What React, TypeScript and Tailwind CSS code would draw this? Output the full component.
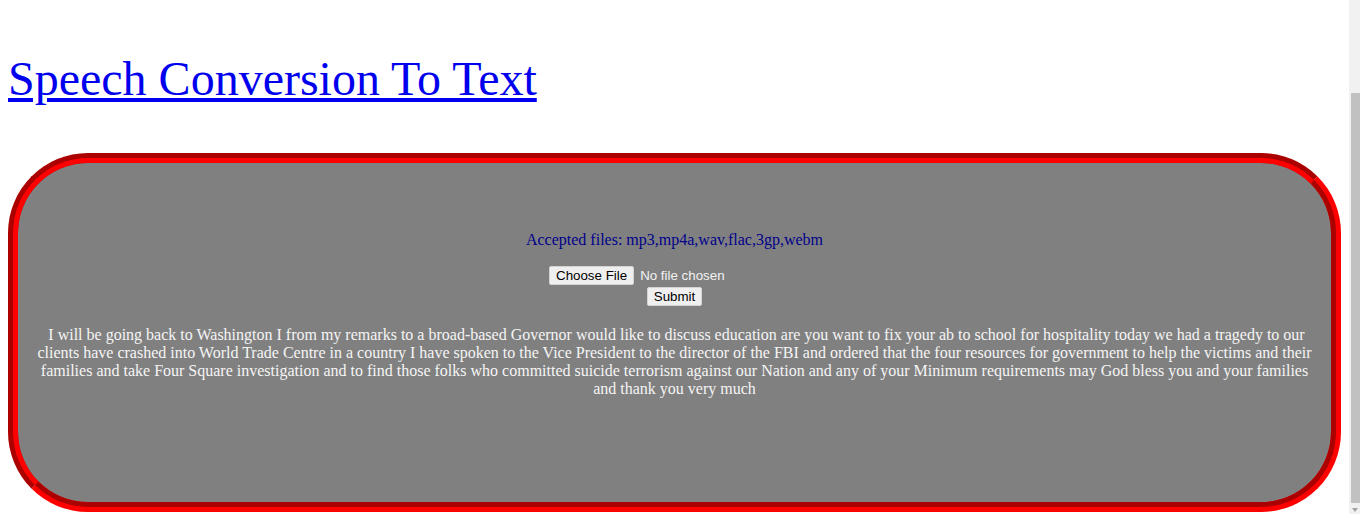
import React from "react";

export default function App() {
  const speech =
    " I will be going back to Washington I from my remarks to a broad-based Governor would like to discuss education are you want to fix your ab to school for hospitality today we had a tragedy to our clients have crashed into World Trade Centre in a country I have spoken to the Vice President to the director of the FBI and ordered that the four resources for government to help the victims and their families and take Four Square investigation and to find those folks who committed suicide terrorism against our Nation and any of your Minimum requirements may God bless you and your families and thank you very much";
  return (
    <div className="flex h-[514px] w-[1360px] overflow-hidden bg-white font-['Liberation_Serif',serif] text-[16px]">
      <main className="flex-1 px-[8px]">
        <h1 className="pt-[51px] text-[48px] leading-[56px] font-normal">
          <a href="#" className="text-[#0000ee] underline">
            Speech Conversion To Text
          </a>
        </h1>
        <section className="mt-[46px] h-[359px] rounded-[80px] border-[10px] border-[#ff0000] [border-style:groove] bg-[#808080] px-[12px] pt-[68px] text-center text-white">
          <p className="leading-[18px] text-[#00008b]">
            Accepted files: mp3,mp4a,wav,flac,3gp,webm
          </p>
          <div className="mt-[17px] flex justify-center">
            <div className="flex w-[251px] items-center gap-[6px] font-['Liberation_Sans',Arial,sans-serif] text-[13.333px]">
              <button className="h-[19px] rounded-[2px] border border-[#d4d4d4] bg-[#efefef] px-[6px] leading-[15px] text-black">
                Choose File
              </button>
              <span className="leading-[15px] text-[#f2f2f2]">No file chosen</span>
            </div>
          </div>
          <div className="mt-[2px] flex justify-center">
            <button className="h-[19px] rounded-[2px] border border-[#d4d4d4] bg-[#efefef] px-[6px] font-['Liberation_Sans',Arial,sans-serif] text-[13.333px] leading-[15px] text-black">
              Submit
            </button>
          </div>
          <p className="mt-[20px] whitespace-pre-wrap leading-[18px] text-[#f5f5f5]">{speech}</p>
        </section>
      </main>
      <div className="relative flex w-[11px] flex-col bg-[#f1f1f1]">
        <div className="mt-[93px] ml-[2px] h-[410px] bg-[#c1c1c1]" />
        <div className="mt-[5px] ml-[3px] h-0 w-0 border-x-[3px] border-t-[4px] border-x-transparent border-t-[#a3a3a3]" />
      </div>
    </div>
  );
}
